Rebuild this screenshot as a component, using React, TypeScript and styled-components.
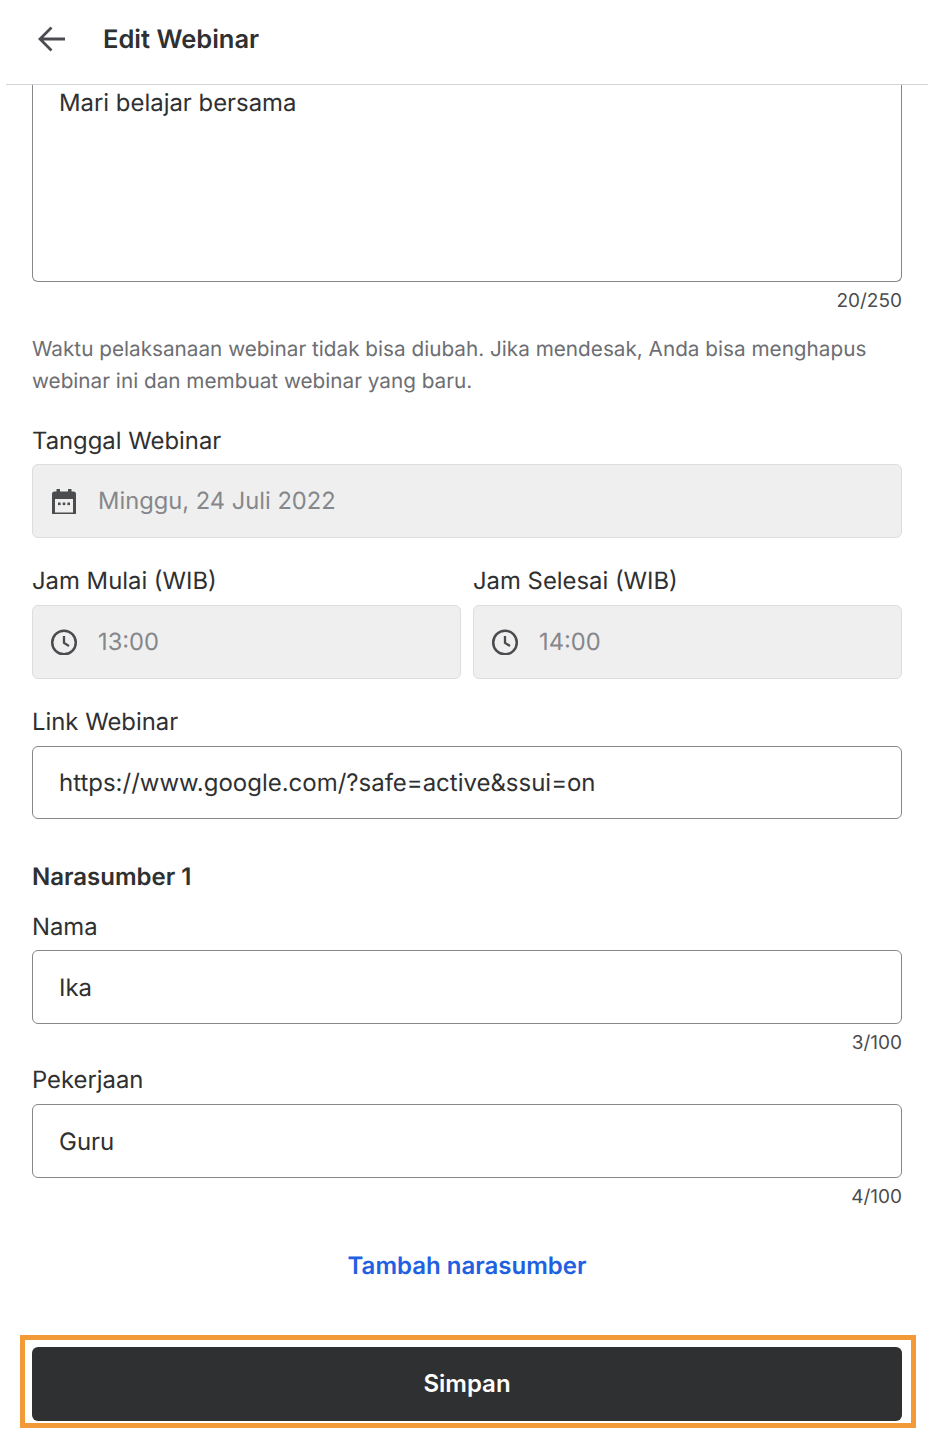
import React from "react";
import styled, { createGlobalStyle } from "styled-components";

const Global = createGlobalStyle`
  html, body { margin: 0; padding: 0; background: #fff; }
  body {
    font-family: Inter, "Noto Sans", sans-serif;
    color: #2f3031;
    text-rendering: geometricPrecision;
  }
`;

const Page = styled.div`
  width: 922px;
  height: 1447px;
  margin-left: 6px;
  overflow: hidden;
`;

const Header = styled.header`
  height: 78px;
  padding: 0 0 6px 30px;
  border-bottom: 1px solid #d3d4da;
  display: flex;
  align-items: center;
  gap: 37px;
`;

const BackIcon = styled.svg`
  width: 30px;
  height: 30px;
  display: block;
  color: #4a4c4f;
`;

const Title = styled.h1`
  margin: 2px 0 0;
  font-size: 25.5px;
  font-weight: 600;
  line-height: 36px;
  color: #2f3031;
`;

const Form = styled.main`
  padding: 0 26px;
  display: flex;
  flex-direction: column;
`;

const TextArea = styled.div`
  height: 196px;
  border: 1px solid #85878b;
  border-top: none;
  border-radius: 0 0 6px 6px;
  padding: 0 26px;
  font-size: 23.9px;
  line-height: 36px;
  color: #2f3031;
`;

const Counter = styled.div`
  font-size: 19px;
  line-height: 24px;
  text-align: right;
  color: #4a4c4f;
  margin-top: 7px;
  margin-bottom: -1px;
`;

const Hint = styled.p`
  margin: 21px 0 0;
  font-size: 20.72px;
  line-height: 32px;
  color: #6c6e72;
`;

const Label = styled.label<{ $after?: number }>`
  display: block;
  font-size: 23.85px;
  line-height: 36px;
  color: #2f3031;
  margin-bottom: ${(p) => p.$after ?? 5}px;
`;

const Field = styled.div<{ $top: number }>`
  margin-top: ${(p) => p.$top}px;
  flex: 1;
  min-width: 0;
`;

const Row = styled.div`
  display: flex;
  gap: 12px;
`;

const InputBox = styled.div<{ $disabled?: boolean; $height?: number }>`
  height: ${(p) => p.$height ?? 74}px;
  box-sizing: border-box;
  border: 1px solid ${(p) => (p.$disabled ? "#dcdde0" : "#85878b")};
  border-radius: 6px;
  background: ${(p) => (p.$disabled ? "#efefef" : "#fff")};
  display: flex;
  align-items: center;
  gap: 20px;
  padding: 0 0 ${(p) => (p.$disabled ? 2 : 0)}px ${(p) => (p.$disabled ? 17 : 26)}px;
  font-size: ${(p) => (p.$disabled ? 23.7 : 23.97)}px;
  color: ${(p) => (p.$disabled ? "#85878b" : "#2f3031")};
`;

const Icon = styled.svg`
  width: 28px;
  height: 28px;
  flex: none;
  color: #4a4c4f;
`;

const Heading = styled.h2`
  margin: 40px 0 0;
  font-size: 24px;
  line-height: 36px;
  font-weight: 600;
  color: #2f3031;
`;

const AddLink = styled.a`
  display: block;
  margin-top: 40px;
  text-align: center;
  font-size: 24px;
  line-height: 36px;
  font-weight: 600;
  color: #2160e0;
`;

const Footer = styled.div`
  position: relative;
  margin-top: 63px;
`;

const SaveButton = styled.button`
  display: block;
  width: 100%;
  height: 74px;
  padding: 0 0 2px;
  border: none;
  border-radius: 6px;
  background: #2f3031;
  color: #fff;
  font-family: inherit;
  font-size: 24px;
  font-weight: 600;
`;

const Highlight = styled.div`
  position: absolute;
  left: -12px;
  right: -14px;
  top: -12px;
  bottom: -7px;
  border: 5px solid #f29a38;
  pointer-events: none;
`;

const Clock = () => (
  <Icon viewBox="0 -1.5 28 28" fill="none" stroke="currentColor">
    <circle cx="14" cy="14" r="11.8" strokeWidth="2.5" />
    <path d="M14 7.5V14.4L19 17.4" strokeWidth="2.3" />
  </Icon>
);

const Calendar = () => (
  <Icon viewBox="0 -2 28 28" fill="currentColor">
    <path
      d="M6.5 1h3.5v2.5h8V1h3.5v2.5h2A2.5 2.5 0 0 1 26 6v19a2.5 2.5 0 0 1-2.5 2.5h-19A2.5 2.5 0 0 1 2 25V6a2.5 2.5 0 0 1 2.5-2.5h2V1zM5 11v13.5h18V11H5z"
      fillRule="evenodd"
    />
    <rect x="8" y="14.5" width="2.6" height="2.6" />
    <rect x="12.7" y="14.5" width="2.6" height="2.6" />
    <rect x="17.4" y="14.5" width="2.6" height="2.6" />
  </Icon>
);

export default function App() {
  return (
    <>
      <Global />
      <Page>
        <Header>
          <BackIcon viewBox="0 0 30 30" fill="none" stroke="currentColor" strokeWidth="2.8">
            <path d="M29 15H4M15.5 3.5L4 15l11.5 11.5" />
          </BackIcon>
          <Title>Edit Webinar</Title>
        </Header>
        <Form>
          <TextArea>Mari belajar bersama</TextArea>
          <Counter>20/250</Counter>
          <Hint>
            Waktu pelaksanaan webinar tidak bisa diubah. Jika mendesak, Anda bisa menghapus
            webinar ini dan membuat webinar yang baru.
          </Hint>
          <Field $top={26}>
            <Label>Tanggal Webinar</Label>
            <InputBox $disabled>
              <Calendar />
              Minggu, 24 Juli 2022
            </InputBox>
          </Field>
          <Row>
            <Field $top={25}>
              <Label $after={6}>Jam Mulai (WIB)</Label>
              <InputBox $disabled>
                <Clock />
                13:00
              </InputBox>
            </Field>
            <Field $top={25}>
              <Label $after={6}>Jam Selesai (WIB)</Label>
              <InputBox $disabled>
                <Clock />
                14:00
              </InputBox>
            </Field>
          </Row>
          <Field $top={25}>
            <Label $after={6}>Link Webinar</Label>
            <InputBox $height={73}>https://www.google.com/?safe=active&amp;ssui=on</InputBox>
          </Field>
          <Heading>Narasumber 1</Heading>
          <Field $top={14}>
            <Label>Nama</Label>
            <InputBox>Ika</InputBox>
          </Field>
          <Counter>3/100</Counter>
          <Field $top={8}>
            <Label $after={6}>Pekerjaan</Label>
            <InputBox>Guru</InputBox>
          </Field>
          <Counter>4/100</Counter>
          <AddLink>Tambah narasumber</AddLink>
          <Footer>
            <SaveButton>Simpan</SaveButton>
            <Highlight />
          </Footer>
        </Form>
      </Page>
    </>
  );
}
